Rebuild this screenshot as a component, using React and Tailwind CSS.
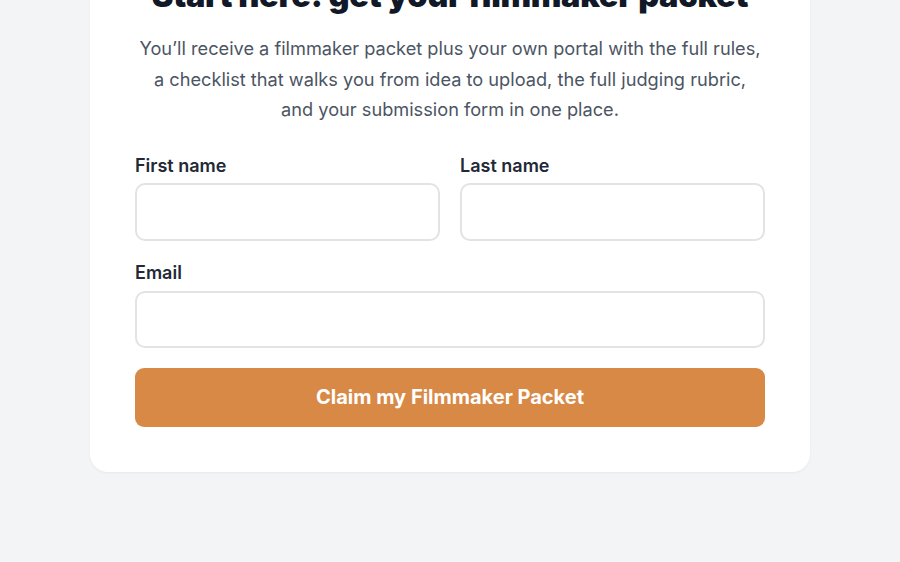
export default function App() {
  return (
    <div
      className="min-h-[562px] h-[562px] overflow-hidden bg-[#f3f4f6]"
      style={{ fontFamily: 'Inter, "Noto Sans", sans-serif' }}
    >
      <div className="mx-auto -mt-[68px] w-[720px] rounded-[18px] bg-white px-[45px] pt-[44px] pb-[45px] shadow-[0_1px_3px_rgba(0,0,0,0.05)]">
        <h2 className="text-center text-[32.5px] font-black leading-[40px] tracking-[-0.01em] text-[#111827]">
          Start here: get your filmmaker packet
        </h2>
        <p className="mt-[17px] text-center text-[18.2px] leading-[30.5px] text-[#4b5563]">
          You’ll receive a filmmaker packet plus your own portal with the full rules,
          <br />
          a checklist that walks you from idea to upload, the full judging rubric,
          <br />
          and your submission form in one place.
        </p>

        <form className="mt-[29px]" onSubmit={(e) => e.preventDefault()}>
          <div className="grid grid-cols-2 gap-x-5">
            <div>
              <label className="block text-[18px] font-semibold leading-[24px] text-[#1f2937]">
                First name
              </label>
              <input
                type="text"
                className="mt-[5px] block h-[58px] w-full rounded-[10px] border-2 border-[#e3e3e6] px-4 text-[17px] outline-none"
              />
            </div>
            <div>
              <label className="block text-[18px] font-semibold leading-[24px] text-[#1f2937]">
                Last name
              </label>
              <input
                type="text"
                className="mt-[5px] block h-[58px] w-full rounded-[10px] border-2 border-[#e3e3e6] px-4 text-[17px] outline-none"
              />
            </div>
          </div>

          <div className="mt-[20px]">
            <label className="block text-[18px] font-semibold leading-[24px] text-[#1f2937]">
              Email
            </label>
            <input
              type="email"
              className="mt-[6px] block h-[57px] w-full rounded-[10px] border-2 border-[#e3e3e6] px-4 text-[17px] outline-none"
            />
          </div>

          <button
            type="submit"
            className="mt-[20px] block h-[59px] w-full rounded-[9px] bg-[#d98946] text-[20px] font-bold text-white"
          >
            Claim my Filmmaker Packet
          </button>
        </form>
      </div>
    </div>
  )
}
